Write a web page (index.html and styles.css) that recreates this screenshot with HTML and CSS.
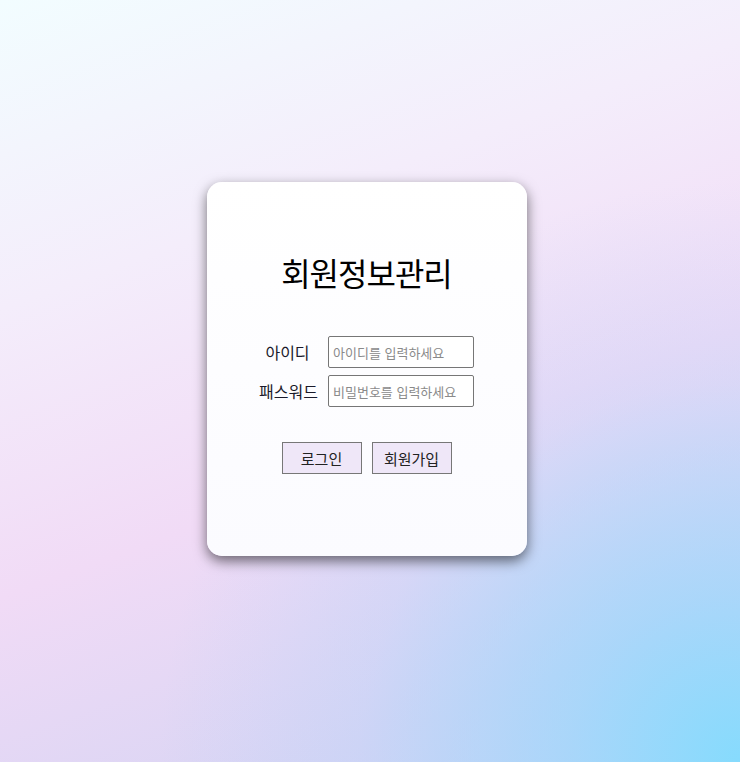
FILE: index.html
```html
<!DOCTYPE html>
<html lang="ko">
<head>
  <meta charset="UTF-8">
  <title>회원정보관리</title>
  <link rel="stylesheet" href="styles.css">
</head>
<body>

  <div class="login-box">
    <h1 class="title">회원정보관리</h1>

    <form class="login-form" onsubmit="return false;">
      <label for="userId">아이디</label>
      <input type="text" id="userId" placeholder="아이디를 입력하세요">
      <label for="userPw">패스워드</label>
      <input type="password" id="userPw" placeholder="비밀번호를 입력하세요">
    </form>

    <div class="btn-row">
      <button type="button" class="btn">로그인</button>
      <button type="button" class="btn">회원가입</button>
    </div>
  </div>

</body>
</html>
```

FILE: styles.css
```css
html { height: 100%; }
body {
  margin: 0;
  padding-right: 7px;
  min-height: 100vh;
  display: flex;
  justify-content: center;
  align-items: flex-start;
  font-family: "Noto Sans CJK KR", "Noto Sans", sans-serif;
  background:
    radial-gradient(circle at 100% 100%, #86dbfd 0, rgba(150, 215, 252, 0.7) 170px, rgba(175, 210, 250, 0.3) 380px, rgba(200, 210, 250, 0) 580px),
    linear-gradient(160deg, #f2fdff 0%, #f4edfb 30%, #f1dbf6 58%, #dad5f4 85%, #d2d3f5 100%);
}
.login-box {
  margin-top: 182px;
  width: 320px;
  height: 374px;
  box-sizing: border-box;
  padding-top: 70px;
  background: linear-gradient(180deg, #ffffff, #fbfbff);
  border-radius: 15px;
  box-shadow: 0 5px 13px rgba(0, 0, 0, 0.55);
  display: flex;
  flex-direction: column;
  align-items: center;
}
.title {
  margin: 0;
  font-size: 32px;
  line-height: 40px;
  font-weight: normal;
  color: #000;
  letter-spacing: -1px;
}
.login-form {
  margin-top: 44px;
  display: grid;
  grid-template-columns: 67px 146px;
  column-gap: 2px;
  row-gap: 7px;
  align-items: center;
}
.login-form label {
  padding-right: 10px;
  text-align: center;
  white-space: nowrap;
  font-size: 16px;
  color: #1a1a2a;
}
.login-form input {
  width: 146px;
  height: 32px;
  box-sizing: border-box;
  border: 1px solid #767676;
  border-radius: 2px;
  padding: 0 4px;
  font-family: inherit;
  font-size: 13px;
}
.login-form input::placeholder { color: #8a8a8a; }
.btn-row {
  margin-top: 35px;
  display: flex;
  gap: 10px;
}
.btn {
  width: 80px;
  height: 32px;
  background: #efe7f8;
  border: 1px solid #777;
  font-family: inherit;
  font-size: 15px;
  color: #222;
  cursor: pointer;
}
```
